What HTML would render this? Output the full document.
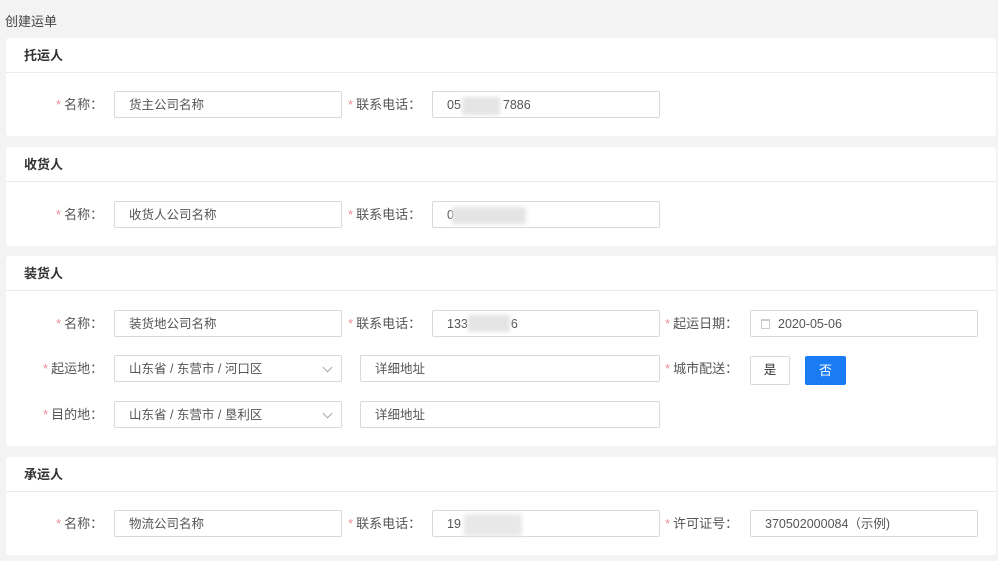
<!DOCTYPE html>
<html><head><meta charset="utf-8"><style>
*{margin:0;padding:0;box-sizing:border-box}
body{width:998px;height:561px;background:#f3f3f3;font-family:"Liberation Sans","Noto Sans CJK SC",sans-serif;font-size:13px;color:#555;position:relative;overflow:hidden}
.a{position:absolute}
.card{position:absolute;left:6px;width:990px;background:#fff;border-radius:3px}
.h{position:absolute;left:0;right:0;top:0;height:35px;border-bottom:1px solid #eaeaea;padding-left:18px;line-height:35px;font-weight:bold;color:#333;font-size:13px}
.in{position:absolute;height:27px;border:1px solid #d9d9d9;border-radius:2px;background:#fff;padding-left:14px;line-height:27px;color:#555;font-size:12.5px}
.lb{position:absolute;height:27px;line-height:28px;color:#555;font-size:13px;white-space:nowrap}
.lb b{color:#f08a9c;font-weight:normal;margin-right:3px}
.blur{position:absolute;background:#e4e4e4;filter:blur(2px)}
.chev{position:absolute;right:10px;top:8px;width:7px;height:7px;border-right:1px solid #aaa;border-bottom:1px solid #aaa;transform:rotate(45deg)}
</style></head><body>
<div class="a" style="left:5px;top:11px;font-size:13px;color:#444">创建运单</div>

<div class="card" style="top:38px;height:98px"><div class="h">托运人</div></div>
<div class="lb" style="left:56px;top:91px"><b>*</b>名称：</div>
<div class="in" style="left:114px;top:91px;width:228px">货主公司名称</div>
<div class="lb" style="left:348px;top:91px"><b>*</b>联系电话：</div>
<div class="in" style="left:432px;top:91px;width:228px">05<span style="display:inline-block;width:42px"></span>7886</div>
<div class="blur" style="left:462px;top:97px;width:38px;height:18px"></div>

<div class="card" style="top:147px;height:99px"><div class="h">收货人</div></div>
<div class="lb" style="left:56px;top:201px"><b>*</b>名称：</div>
<div class="in" style="left:114px;top:201px;width:228px">收货人公司名称</div>
<div class="lb" style="left:348px;top:201px"><b>*</b>联系电话：</div>
<div class="in" style="left:432px;top:201px;width:228px">0</div>
<div class="blur" style="left:452px;top:207px;width:74px;height:17px"></div>

<div class="card" style="top:256px;height:190px"><div class="h">装货人</div></div>
<div class="lb" style="left:56px;top:310px"><b>*</b>名称：</div>
<div class="in" style="left:114px;top:310px;width:228px">装货地公司名称</div>
<div class="lb" style="left:348px;top:310px"><b>*</b>联系电话：</div>
<div class="in" style="left:432px;top:310px;width:228px">133<span style="display:inline-block;width:43px"></span>6</div>
<div class="blur" style="left:468px;top:315px;width:42px;height:17px"></div>
<div class="lb" style="left:665px;top:310px"><b>*</b>起运日期：</div>
<div class="in" style="left:750px;top:310px;width:228px;padding-left:10px"><span style="display:inline-block;width:9px;height:10px;border:1px solid #ccc;border-top:2px solid #ccc;vertical-align:-1px;margin-right:8px"></span>2020-05-06</div>

<div class="lb" style="left:43px;top:355px"><b>*</b>起运地：</div>
<div class="in" style="left:114px;top:355px;width:228px">山东省 / 东营市 / 河口区<div class="chev"></div></div>
<div class="in" style="left:360px;top:355px;width:300px">详细地址</div>
<div class="lb" style="left:665px;top:355px"><b>*</b>城市配送：</div>
<div class="in" style="left:750px;top:356px;width:40px;padding:0;text-align:center;height:29px;line-height:27px;color:#333">是</div>
<div class="a" style="left:805px;top:356px;width:41px;height:29px;background:#1a7cf5;border-radius:2px;color:#fff;text-align:center;line-height:29px">否</div>

<div class="lb" style="left:43px;top:401px"><b>*</b>目的地：</div>
<div class="in" style="left:114px;top:401px;width:228px">山东省 / 东营市 / 垦利区<div class="chev"></div></div>
<div class="in" style="left:360px;top:401px;width:300px">详细地址</div>

<div class="card" style="top:457px;height:98px"><div class="h">承运人</div></div>
<div class="lb" style="left:56px;top:510px"><b>*</b>名称：</div>
<div class="in" style="left:114px;top:510px;width:228px">物流公司名称</div>
<div class="lb" style="left:348px;top:510px"><b>*</b>联系电话：</div>
<div class="in" style="left:432px;top:510px;width:228px">19</div>
<div class="blur" style="left:464px;top:514px;width:58px;height:22px;background:#e8e8e8"></div>
<div class="lb" style="left:665px;top:510px"><b>*</b>许可证号：</div>
<div class="in" style="left:750px;top:510px;width:228px">370502000084（示例)</div>
</body></html>
